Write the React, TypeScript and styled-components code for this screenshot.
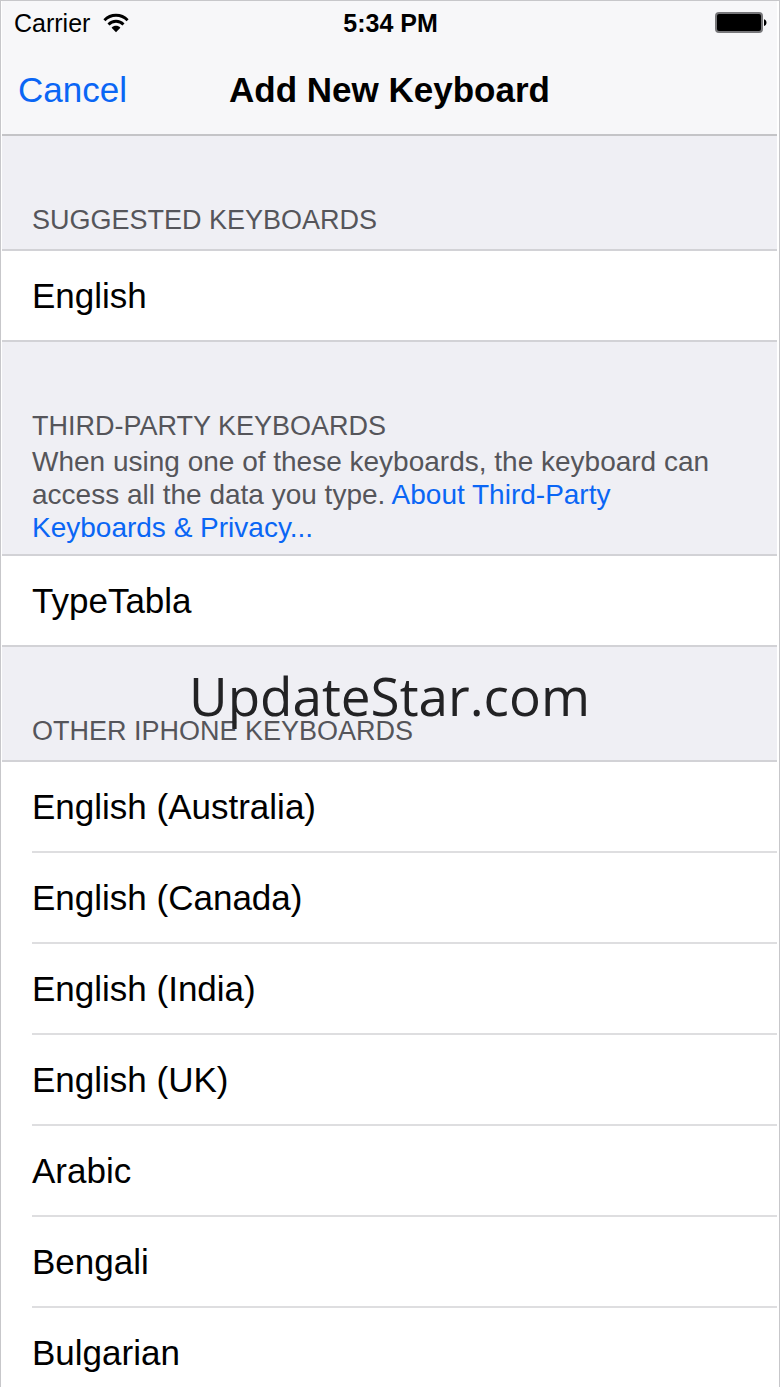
import React from "react";
import styled, { createGlobalStyle } from "styled-components";

const GlobalStyle = createGlobalStyle`
  * { box-sizing: border-box; }
  body {
    margin: 0;
    background: #fff;
    color: #000;
    font-family: "Liberation Sans", Arial, Helvetica, sans-serif;
  }
`;

const Screen = styled.div`
  position: relative;
  border: 1px solid #c7c7ca;
  border-bottom: 0;
  padding-right: 2px;
  padding-left: 1px;
  height: 100vh;
  overflow-y: auto;
  scrollbar-width: none;
`;

const TopBar = styled.header`
  background: #f7f7f9;
  border-bottom: 2px solid #c4c4c7;
`;

const StatusBar = styled.div`
  display: grid;
  grid-template-columns: 1fr auto 1fr;
  align-items: center;
  height: 44px;
  padding: 0 10px 0 12px;
  font-size: 25px;
`;

const Carrier = styled.div`
  display: flex;
  align-items: center;
  gap: 13px;
`;

const Time = styled.time`
  font-weight: 700;
`;

const Battery = styled.svg`
  justify-self: end;
`;

const NavBar = styled.div`
  display: grid;
  grid-template-columns: 1fr auto 1fr;
  align-items: center;
  height: 89px;
  padding: 0 16px;
`;

const NavButton = styled.button`
  justify-self: start;
  border: 0;
  padding: 0;
  background: none;
  color: #0a66f5;
  font: inherit;
  font-size: 35px;
  line-height: 40px;
  cursor: pointer;
`;

const Title = styled.h1`
  margin: 0;
  font-size: 35px;
  line-height: 40px;
`;

const SectionHeader = styled.div`
  position: relative;
  padding: 66px 32px 10px 30px;
  background: #efeff4;
  border-bottom: 2px solid #d2d2d6;
  color: #55555a;
`;

const SectionTitle = styled.h2`
  margin: 0;
  font-size: 27px;
  font-weight: 400;
  line-height: 37px;
  text-transform: uppercase;
`;

const Note = styled.p`
  margin: 0;
  font-size: 28px;
  line-height: 33px;
`;

const NoteLink = styled.a`
  color: #0a66f5;
  text-decoration: none;
`;

const List = styled.ul<{ $last?: boolean }>`
  margin: 0;
  padding: 0;
  list-style: none;
  border-bottom: ${(p) => (p.$last ? "0" : "2px solid #d2d2d6")};
`;

const Item = styled.li`
  padding-left: 30px;
`;

const Row = styled.button<{ $divided?: boolean }>`
  display: block;
  width: 100%;
  height: ${(p) => (p.$divided ? "91px" : "89px")};
  border: 0;
  border-bottom: ${(p) => (p.$divided ? "2px solid #dedee0" : "0")};
  padding: 0;
  background: none;
  color: inherit;
  font: inherit;
  font-size: 35px;
  line-height: 40px;
  text-align: left;
  cursor: pointer;
`;

const Watermark = styled.div`
  position: absolute;
  inset: 13px 0 auto;
  color: #222224;
  font-family: "Open Sans", "Noto Sans", sans-serif;
  font-size: 53px;
  line-height: 72px;
  text-align: center;
  pointer-events: none;
`;

const OTHER = [
  "English (Australia)",
  "English (Canada)",
  "English (India)",
  "English (UK)",
  "Arabic",
  "Bengali",
  "Bulgarian",
];

const WifiIcon = () => (
  <svg width="26" height="20" viewBox="0 0 26 20" aria-label="Wi-Fi" role="img">
    <g fill="none" stroke="#000" strokeWidth="2.8">
      <path d="M1.4 7.2C7.8 .6 18.2 .6 24.6 7.2" />
      <path d="M5.5 11.4C9.6 7.2 16.4 7.2 20.5 11.4" />
    </g>
    <path d="M8.6 14.7C11 12.2 15 12.2 17.4 14.7L13 19.2Z" />
  </svg>
);

const BatteryIcon = () => (
  <Battery width="52" height="22" viewBox="0 0 52 22" aria-label="Battery full" role="img">
    <rect x="1" y="1" width="46" height="19" rx="3" fill="#000" stroke="#77777a" strokeWidth="2" />
    <path d="M49 7.2C52.3 7.8 52.3 13.4 49 14Z" />
  </Battery>
);

export default function App() {
  return (
    <Screen>
      <GlobalStyle />
      <TopBar>
        <StatusBar>
          <Carrier>
            Carrier
            <WifiIcon />
          </Carrier>
          <Time>5:34 PM</Time>
          <BatteryIcon />
        </StatusBar>
        <NavBar>
          <NavButton type="button">Cancel</NavButton>
          <Title>Add New Keyboard</Title>
        </NavBar>
      </TopBar>
      <main>
        <section>
          <SectionHeader>
            <SectionTitle>Suggested Keyboards</SectionTitle>
          </SectionHeader>
          <List>
            <Item>
              <Row type="button">English</Row>
            </Item>
          </List>
        </section>
        <section>
          <SectionHeader>
            <SectionTitle>Third-Party Keyboards</SectionTitle>
            <Note>
              When using one of these keyboards, the keyboard can access all the data you type.{" "}
              <NoteLink href="#privacy">About Third-Party Keyboards &amp; Privacy...</NoteLink>
            </Note>
          </SectionHeader>
          <List>
            <Item>
              <Row type="button">TypeTabla</Row>
            </Item>
          </List>
        </section>
        <section>
          <SectionHeader>
            <SectionTitle>Other iPhone Keyboards</SectionTitle>
            <Watermark>UpdateStar.com</Watermark>
          </SectionHeader>
          <List $last>
            {OTHER.map((name) => (
              <Item key={name}>
                <Row type="button" $divided>
                  {name}
                </Row>
              </Item>
            ))}
          </List>
        </section>
      </main>
    </Screen>
  );
}
